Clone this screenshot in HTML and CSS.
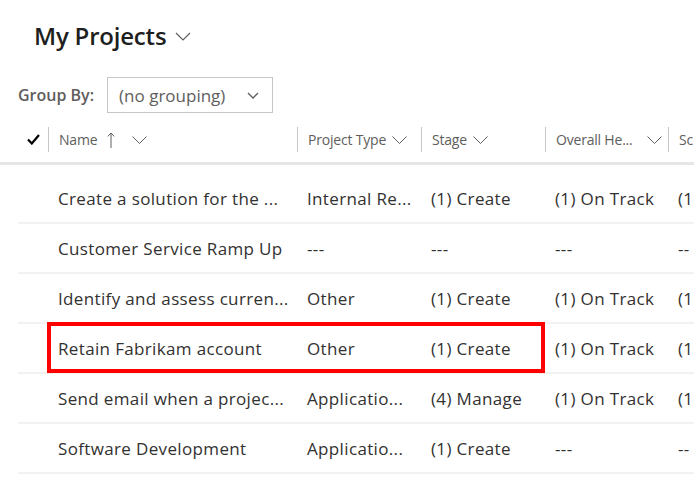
FILE: index.html
```html
<!DOCTYPE html>
<html>
<head>
<meta charset="utf-8">
<link rel="stylesheet" href="styles.css">
</head>
<body>
<div class="page">
  <div class="title">
    <span>My Projects</span>
    <svg class="title-chev" width="16" height="9" viewBox="0 0 16 9"><path d="M1 1 L8 8 L15 1" fill="none" stroke="#605e5c" stroke-width="1.2"/></svg>
  </div>
  <div class="groupby">
    <span class="gb-label">Group By:</span>
    <div class="gb-select">
      <span>(no grouping)</span>
      <svg width="12" height="7" viewBox="0 0 12 7"><path d="M1 1 L6 6 L11 1" fill="none" stroke="#605e5c" stroke-width="1.3"/></svg>
    </div>
  </div>
  <div class="grid">
    <div class="header">
      <div class="hcell check">
        <svg width="13" height="11" viewBox="0 0 13 11"><path d="M1 5.5 L4.8 9.5 L12 1" fill="none" stroke="#000" stroke-width="2.2"/></svg>
      </div>
      <div class="hcell sep name-h">
        <span>Name</span>
        <svg class="arrow" width="8" height="16" viewBox="0 0 8 16"><path d="M4 1 V16 M0.8 4.4 L4 1 L7.2 4.4" fill="none" stroke="#605e5c" stroke-width="1"/></svg>
        <svg class="chev" width="15" height="8" viewBox="0 0 15 8"><path d="M0.5 0.5 L7.5 7.5 L14.5 0.5" fill="none" stroke="#605e5c" stroke-width="1"/></svg>
      </div>
      <div class="hcell sep">
        <span>Project Type</span>
        <svg class="chev" width="15" height="8" viewBox="0 0 15 8"><path d="M0.5 0.5 L7.5 7.5 L14.5 0.5" fill="none" stroke="#605e5c" stroke-width="1"/></svg>
      </div>
      <div class="hcell sep">
        <span>Stage</span>
        <svg class="chev" width="15" height="8" viewBox="0 0 15 8"><path d="M0.5 0.5 L7.5 7.5 L14.5 0.5" fill="none" stroke="#605e5c" stroke-width="1"/></svg>
      </div>
      <div class="hcell sep spread">
        <span>Overall He...</span>
        <svg class="chev" width="15" height="8" viewBox="0 0 15 8"><path d="M0.5 0.5 L7.5 7.5 L14.5 0.5" fill="none" stroke="#605e5c" stroke-width="1"/></svg>
      </div>
      <div class="hcell sep"><span>Sc</span></div>
    </div>
    <div class="rows">
      <div class="row"><div></div><div class="cell">Create a solution for the ...</div><div class="cell">Internal Re...</div><div class="cell">(1) Create</div><div class="cell">(1) On Track</div><div class="cell">(1</div></div>
      <div class="row"><div></div><div class="cell">Customer Service Ramp Up</div><div class="cell">---</div><div class="cell">---</div><div class="cell">---</div><div class="cell">--</div></div>
      <div class="row"><div></div><div class="cell">Identify and assess curren...</div><div class="cell">Other</div><div class="cell">(1) Create</div><div class="cell">(1) On Track</div><div class="cell">(1</div></div>
      <div class="row"><div></div><div class="cell">Retain Fabrikam account</div><div class="cell">Other</div><div class="cell">(1) Create</div><div class="cell">(1) On Track</div><div class="cell">(1</div></div>
      <div class="row"><div></div><div class="cell">Send email when a projec...</div><div class="cell">Applicatio...</div><div class="cell">(4) Manage</div><div class="cell">(1) On Track</div><div class="cell">(1</div></div>
      <div class="row"><div></div><div class="cell">Software Development</div><div class="cell">Applicatio...</div><div class="cell">(1) Create</div><div class="cell">---</div><div class="cell">--</div></div>
      <div class="highlight"></div>
    </div>
  </div>
</div>
</body>
</html>
```
FILE: styles.css
```css
html, body {
  margin: 0;
  padding: 0;
  background: #fff;
}
body {
  font-family: "Open Sans", "Noto Sans", sans-serif;
  color: #323130;
  overflow: hidden;
  width: 694px;
  height: 487px;
}
.page {
  width: 694px;
  overflow: hidden;
}
.title {
  display: flex;
  align-items: center;
  gap: 9px;
  margin: 19px 0 0 34px;
  height: 32px;
  font-size: 24px;
  font-weight: 600;
  color: #201f1e;
  letter-spacing: -0.2px;
}
.title-chev {
  margin-top: 2px;
}
.groupby {
  display: flex;
  align-items: center;
  margin: 26px 0 0 18px;
  gap: 13px;
}
.gb-label {
  font-size: 16px;
  font-weight: 600;
  color: #605e5c;
  letter-spacing: 0;
}
.gb-select {
  box-sizing: border-box;
  width: 166px;
  height: 36px;
  border: 1px solid #c8c6c4;
  display: flex;
  align-items: center;
  justify-content: space-between;
  padding: 0 13px 0 11px;
  font-size: 17px;
  color: #605e5c;
}
.grid {
  margin-top: 14px;
  width: 900px;
}
.header {
  display: grid;
  grid-template-columns: 48px 249px 124px 124px 123px 200px;
  height: 35px;
  border-bottom: 3px solid #e6e6e6;
}
.hcell {
  height: 25px;
  display: flex;
  align-items: center;
  font-size: 14px;
  color: #605e5c;
  box-sizing: border-box;
  padding-left: 10px;
  gap: 6px;
  letter-spacing: -0.2px;
}
.hcell.sep {
  border-left: 1px solid #c8c6c4;
}
.check {
  justify-content: flex-end;
  padding-right: 8px;
}
.name-h .arrow {
  margin-left: 4px;
}
.name-h .chev {
  margin-left: 11px;
}
.spread {
  justify-content: space-between;
  padding-right: 6px;
}
.rows {
  position: relative;
  margin: 9px 0 0 18px;
}
.row {
  display: grid;
  grid-template-columns: 30px 249px 124px 124px 123px 200px;
  height: 50px;
  box-sizing: border-box;
  border-bottom: 2px solid #f3f2f1;
  align-items: center;
  font-size: 17px;
  letter-spacing: 0.35px;
  padding-top: 1px;
}
.cell {
  padding: 0 10px;
  white-space: nowrap;
  overflow: hidden;
}
.highlight {
  position: absolute;
  left: 29px;
  top: 148px;
  width: 498px;
  height: 51px;
  box-sizing: border-box;
  border: 4px solid #f00;
}
```
